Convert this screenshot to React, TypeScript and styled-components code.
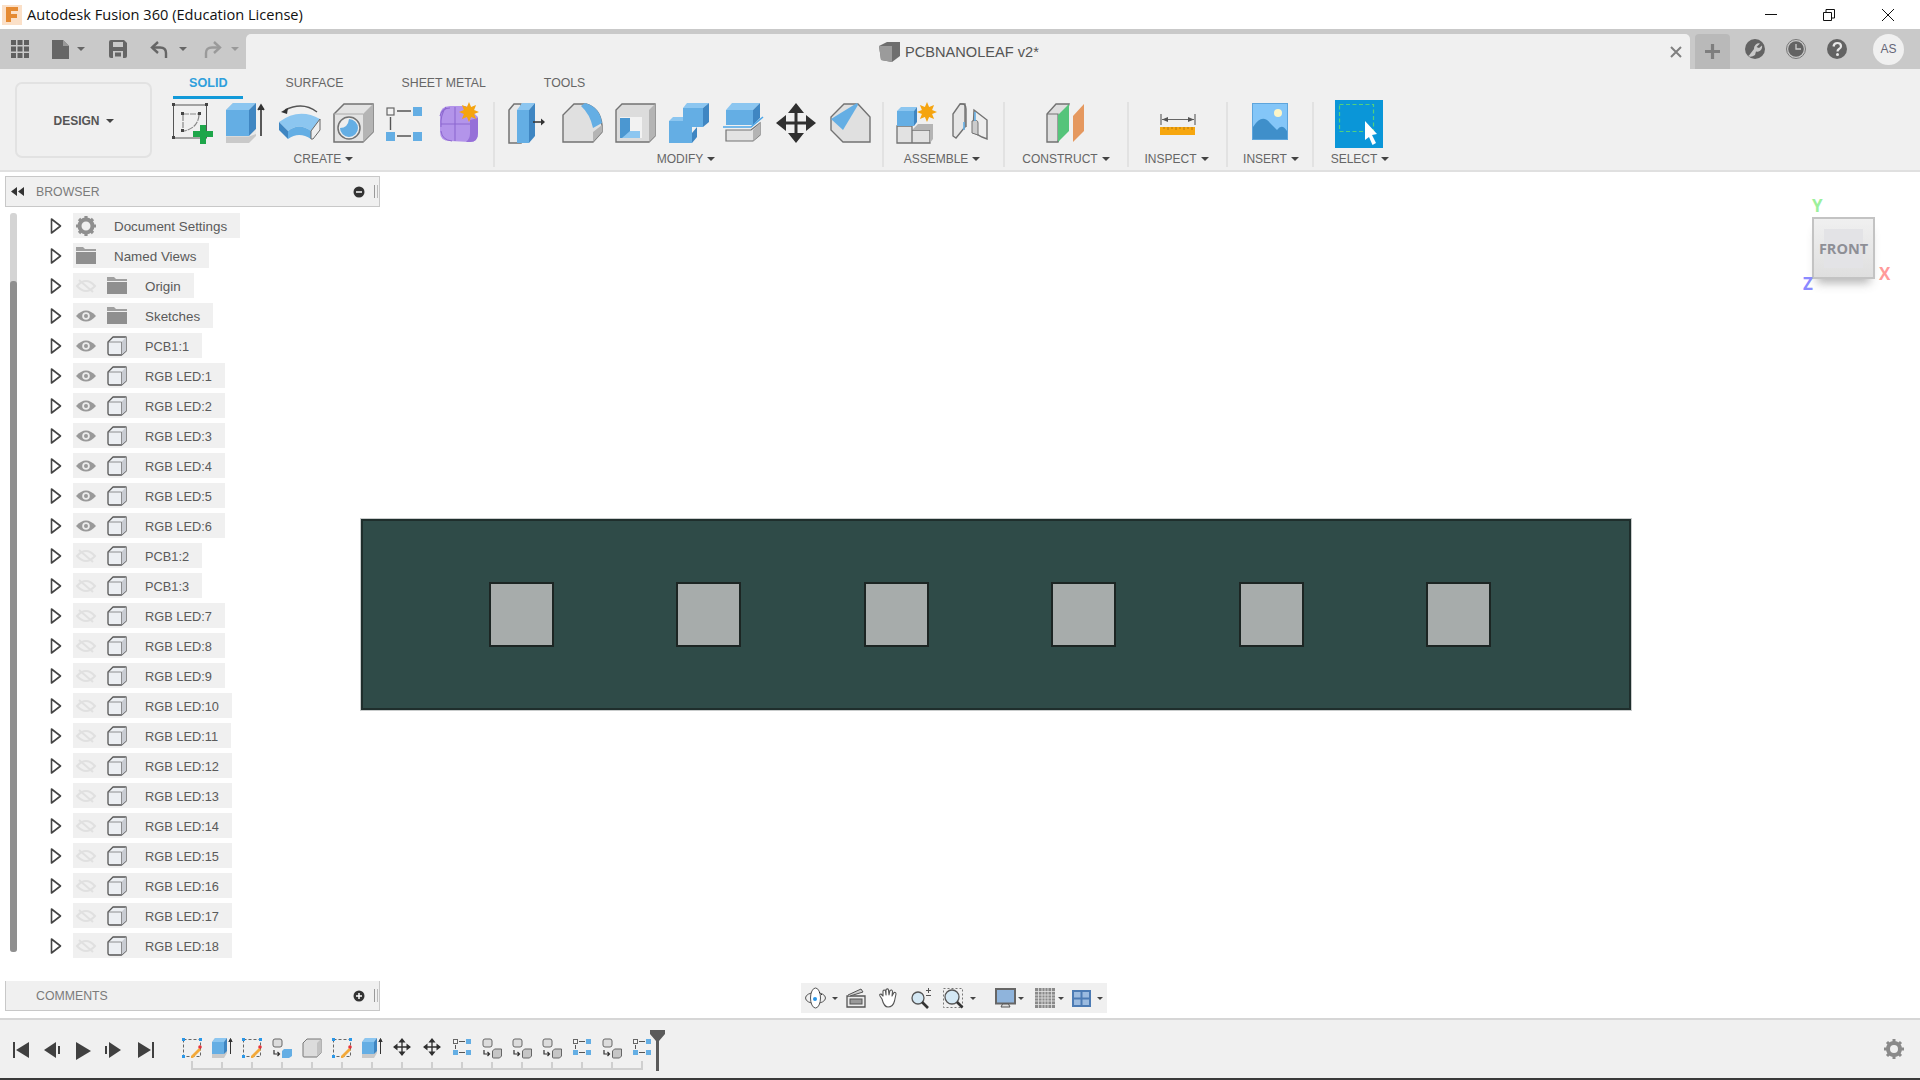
import React from "react";
import styled, { createGlobalStyle } from "styled-components";

const B = "#64aee4", BL = "#8cc6f0", BD = "#3f86c2", GD = "#b4b4b4", S = "#727272", DK = "#404040";

const Global = createGlobalStyle`
  html, body { margin: 0; padding: 0; width: 1920px; height: 1080px; overflow: hidden; background: #fff; }
  body { font-family: "Liberation Sans", Arial, sans-serif; }
`;

const Page = styled.div`
  width: 1920px; height: 1080px; display: flex; flex-direction: column; background: #fff; overflow: hidden;
`;

/* title bar */
const TitleBar = styled.header`
  height: 29px; flex: none; display: flex; align-items: center; padding-left: 2px; background: #fff;
`;
const TitleText = styled.span`
  margin-left: 5px; margin-top: -2px; font: 14.6px "Open Sans", sans-serif; color: #111; white-space: nowrap; flex: 1;
`;
const WinBtn = styled.div<{ $w: number }>`
  width: ${p => p.$w}px; display: flex; justify-content: flex-start; flex: none;
`;

/* tab bar */
const TabBar = styled.div`
  height: 40px; flex: none; background: #c9c9c9; display: flex; align-items: flex-end;
`;
const QuickBar = styled.div`
  width: 246px; height: 40px; flex: none; display: flex; align-items: center; padding-left: 11px; box-sizing: border-box;
`;
const Quick = styled.span<{ $ml?: number }>`
  margin-left: ${p => p.$ml ?? 0}px; display: flex; align-items: center;
`;
const DocTab = styled.div`
  width: 1444px; height: 35px; flex: none; background: #f0f0f0; border-radius: 5px 5px 0 0;
  display: flex; align-items: center; padding-left: 633px; padding-right: 8px; box-sizing: border-box;
`;
const DocTitle = styled.span`
  margin-left: 5px; flex: 1; font-size: 14.6px; color: #555; white-space: nowrap;
`;
const PlusTab = styled.div`
  margin-left: 5px; width: 35px; height: 35px; flex: none; background: #b9b9b9; border-radius: 4px 4px 0 0;
  display: flex; align-items: center; justify-content: center;
`;
const TopIcons = styled.div`
  display: flex; align-items: center; height: 40px; padding-left: 15px;
`;
const TopIcon = styled.span<{ $ml: number }>`
  margin-left: ${p => p.$ml}px; display: flex;
`;
const Avatar = styled.div`
  margin-left: 26px; width: 31px; height: 31px; border-radius: 50%; background: #f0f0f0; color: #667;
  display: flex; align-items: center; justify-content: center; font-size: 12px;
`;

/* ribbon */
const Ribbon = styled.div`
  height: 88px; flex: none; background: #f0f0f0; border-bottom: 2px solid #e0e0e0; display: flex;
  padding: 13px 0 0 15px;
`;
const DesignBtn = styled.button`
  width: 137px; height: 76px; flex: none; box-sizing: border-box; border: 2px solid #e2e2e2; border-radius: 7px; background: #f0f0f0;
  font: bold 12px "Liberation Sans", sans-serif; color: #555; display: flex; align-items: center; justify-content: center; gap: 6px; padding: 1px 0 0;
`;
const RibbonBody = styled.div`
  margin-left: 20px; margin-top: -7px; display: flex; flex-direction: column;
`;
const Tabs = styled.div`
  display: flex; gap: 26px; height: 24px; flex: none; margin-left: 1px;
`;
const Tab = styled.div<{ $on?: boolean }>`
  padding: 0 16px; height: 24px; box-sizing: border-box; line-height: 16px; font-size: ${p => (p.$on ? 12.6 : 12.3)}px;
  font-weight: ${p => (p.$on ? "bold" : "normal")}; color: ${p => (p.$on ? "#2f9fdc" : "#666")};
  border-bottom: 3px solid ${p => (p.$on ? "#129ad9" : "transparent")}; white-space: nowrap;
`;
const Groups = styled.div`
  display: flex; margin-top: 3px;
`;
const Group = styled.div<{ $w: number; $pad?: string; $sep?: boolean }>`
  width: ${p => p.$w}px; box-sizing: border-box; padding: ${p => p.$pad ?? "0"};
  border-right: ${p => (p.$sep === false ? "none" : "2px solid #e2e2e2")};
  display: flex; flex-direction: column; align-items: center; height: 65px;
`;
const IconRow = styled.div<{ $gap?: number; $center?: boolean }>`
  display: flex; flex: none; gap: ${p => p.$gap ?? 14}px; height: 46px; padding-top: 1px; align-items: flex-start; align-self: stretch;
  justify-content: ${p => (p.$center ? "center" : "flex-start")};
`;
const IconCell = styled.span<{ $w?: number; $dy?: number }>`
  display: flex; flex: none; width: ${p => p.$w ?? 40}px; margin-top: ${p => p.$dy ?? 0}px;
`;
const GroupLabel = styled.div<{ $dx?: number }>`
  margin-top: 2px; margin-left: ${p => p.$dx ?? 0}px; font-size: 12px; line-height: 16px; color: #666; display: flex; align-items: center; gap: 4px; white-space: nowrap;
`;
const Caret = styled.i<{ $c?: string; $s?: number }>`
  display: inline-block; width: 0; height: 0; flex: none;
  border-left: ${p => p.$s ?? 4}px solid transparent; border-right: ${p => p.$s ?? 4}px solid transparent;
  border-top: ${p => (p.$s ?? 4) + 0.5}px solid ${p => p.$c ?? "#444"};
`;

/* stage */
const Stage = styled.main`
  flex: 1; position: relative; display: flex; min-height: 0;
`;
const Sidebar = styled.aside`
  width: 380px; margin-right: -19px; flex: none; display: flex; flex-direction: column; padding: 4px 0 7px 5px; box-sizing: border-box; position: relative; z-index: 1;
`;
const PanelHead = styled.div<{ $open?: boolean }>`
  height: ${p => (p.$open ? 31 : 30)}px; flex: none; box-sizing: border-box; background: #f0f0f0;
  border: 1px solid #c8c8c8; border-top-width: ${p => (p.$open ? 1 : 0)}px; display: flex; align-items: center; padding: 0 1px 0 ${p => (p.$open ? 5 : 30)}px;
  margin-top: ${p => (p.$open ? 0 : "auto")};
`;
const PanelTitle = styled.span<{ $open?: boolean }>`
  margin-left: ${p => (p.$open ? 12 : 0)}px; flex: 1; font-size: 12.3px; color: #7b7b7b;
`;
const Grip = styled.span`
  margin-left: 9px; width: 2px; height: 13px; box-sizing: content-box; border-left: 1px solid #999; border-right: 1px solid #bbb;
`;
const Tree = styled.div`
  display: flex; margin-top: 6px;
`;
const ScrollTrack = styled.div`
  margin-left: 5px; width: 7px; height: 739px; flex: none; background: #d4d4d4; border-radius: 3px; display: flex; flex-direction: column; justify-content: flex-end;
`;
const ScrollThumb = styled.div`
  height: 671px; background: #8f8f8f; border-radius: 3px;
`;
const Rows = styled.ul`
  list-style: none; margin: 0; padding: 0 0 0 33px; display: flex; flex-direction: column; gap: 5px;
`;
const Row = styled.li`
  height: 25px; display: flex; align-items: center; gap: 11px;
`;
const Pill = styled.div`
  height: 25px; background: #f0f0f0; display: flex; align-items: center; padding: 0 13px 0 3px;
`;
const Slot = styled.span<{ $mr: number }>`
  width: 20px; margin-right: ${p => p.$mr}px; display: flex; justify-content: center; flex: none;
`;
const RowLabel = styled.span<{ $body?: boolean }>`
  font-size: ${p => (p.$body ? 12.8 : 13.4)}px; color: #5a5a5a; white-space: nowrap; padding-top: 1px;
`;

/* canvas */
const Canvas = styled.section`
  flex: 1; padding-top: 347px; min-width: 0;
`;
const Board = styled.div`
  width: 1270px; height: 191px; box-sizing: border-box; background: #2f4b48; border: 2px solid #1f2e2c; outline: 1px solid #c9cccc;
  display: flex; align-items: center; padding-left: 125.5px; gap: 122.5px;
`;
const Led = styled.div`
  width: 65px; height: 65px; flex: none; box-sizing: border-box; background: #a7acab; border: 2px solid #1c2523;
`;
const ViewCube = styled.div`
  position: absolute; left: 1812px; top: 45px; width: 63px; height: 62px; box-sizing: border-box; border: 2px solid #c3c3c3;
  background: linear-gradient(#f0f0f0, #dfdfdf); display: flex; align-items: center; justify-content: center;
  box-shadow: 0 9px 9px -5px rgba(90, 90, 90, .45);
`;
const CubeFace = styled.div`
  width: 39px; height: 39px; background: #e3e3e6; display: flex; align-items: center; justify-content: center;
  font: bold 14.5px "Open Sans", sans-serif; color: #8e8f96; white-space: nowrap;
`;
const Axis = styled.span<{ $c: string; $x: number; $y: number }>`
  position: absolute; left: ${p => p.$x}px; top: ${p => p.$y}px; color: ${p => p.$c}; font: bold 17px "Open Sans", sans-serif; line-height: 16px;
`;
const NavBar = styled.div`
  position: absolute; left: 801px; top: 811px; width: 306px; height: 30px; background: #f0f0f0; display: flex; align-items: center;
`;
const NavItem = styled.span<{ $x: number }>`
  margin-left: ${p => p.$x}px; display: flex; align-items: center;
`;

/* timeline */
const Timeline = styled.footer`
  height: 62px; flex: none; box-sizing: border-box; background: #f0f0f0; border-top: 2px solid #d6d6d6; border-bottom: 2px solid #3a3a3a;
  display: flex; padding-left: 13px; position: relative;
`;
const Transport = styled.span<{ $ml: number }>`
  margin-left: ${p => p.$ml}px; margin-top: 22px; display: flex; height: 16px;
`;
const Track = styled.div`
  margin-left: 23px; margin-top: 18px; display: flex; flex-direction: column;
`;
const TrackIcons = styled.div`
  display: flex; height: 22px;
`;
const TrackItem = styled.span`
  width: 30px; flex: none; display: flex; justify-content: center;
`;
const Marker = styled.div`
  margin-left: -7px; margin-top: 10px; display: flex;
`;
const Cog = styled.span`
  margin-left: auto; margin-right: 16px; margin-top: 19px; display: flex; height: 20px;
`;

const Glyph = styled.svg`
  display: block; flex: none; overflow: visible;
`;
const I: React.FC<{ w?: number; h?: number; vw?: number; vh?: number; children: React.ReactNode }> = ({ w = 40, h = 40, vw, vh, children }) => (
  <Glyph width={w} height={h} viewBox={`0 0 ${vw ?? w} ${vh ?? h}`}>{children}</Glyph>
);

/* ribbon icons */
const Sq = ({ x, y, s = 3, c = "#444" }: { x: number; y: number; s?: number; c?: string }) => <rect x={x} y={y} width={s} height={s} fill={c} />;
const SketchI = () => (
  <I>
    <rect x="1.5" y="2" width="33" height="33" fill="none" stroke="#555" strokeWidth="1" />
    <Sq x={0} y={0} /><Sq x={33} y={0} /><Sq x={0} y={33} />
    <path d="M11 11H27M11 12V28M27 12Q26 25 12 28" fill="none" stroke="#888" strokeWidth="1.2" strokeDasharray="6 1" />
    <Sq x={9} y={9} /><Sq x={26} y={9} /><Sq x={9} y={26} />
    <path d="M28 22h6v6h7v6h-7v7h-6v-7h-7v-6h7z" fill="#1ea64a" />
  </I>
);
const ExtrudeI = () => (
  <I>
    <path d="M0 7L7 0H30V33L23 40H0Z" fill="#c9c9c9" />
    <path d="M0 7H23V33H0Z" fill={B} /><path d="M0 7L7 0H30L23 7Z" fill={BL} /><path d="M23 7L30 0V26L23 33Z" fill={BD} />
    <path d="M0 33H23L30 26V31L23 33.5H0Z" fill="#fff" opacity=".6" />
    <path d="M35 33V3M32 7L35 2L38 7" stroke="#333" strokeWidth="1.6" fill="#333" />
  </I>
);
const RevolveI = () => (
  <I w={42}>
    <path d="M6 7Q24 -2 38 9" fill="none" stroke="#555" strokeWidth="1.4" />
    <path d="M2 9L9 5L8 11Z" fill="#333" />
    <path d="M0 19Q20 4 41 16L32 28Q20 19 9 28Z" fill={BL} />
    <path d="M0 19L9 28V36L0 27Z" fill={BD} />
    <path d="M9 28Q20 19 32 28V36Q20 28 9 36Z" fill={B} />
    <path d="M32 28L41 16V27L34 36L32 36Z" fill="#eee" stroke="#666" strokeWidth="1" />
  </I>
);
const HoleI = () => (
  <I w={41}>
    <path d="M1 39V11L11 1H40V29L30 39Z" fill="#e3e3e3" stroke={S} strokeWidth="1.5" />
    <path d="M30 39V11L40 1V29Z" fill={GD} /><path d="M1 11H30" stroke="#aaa" />
    <circle cx="16" cy="25" r="11" fill="#eee" stroke={S} strokeWidth="1.5" />
    <path d="M16 16a9 9 0 1 1 -9 9q8 0 9 -9z" fill={B} />
  </I>
);
const PatternI = () => (
  <I w={37} h={38}>
    <rect x="1" y="5" width="7" height="7" fill="#f3f3f3" stroke="#666" strokeWidth="1.2" />
    <rect x="27" y="4" width="9" height="9" fill={B} /><rect x="0" y="29" width="9" height="9" fill={B} /><rect x="27" y="29" width="9" height="9" fill={B} />
    <path d="M11 8H25M11 33H25M4.5 14V27" stroke="#555" strokeWidth="1.4" />
  </I>
);
const StarOrange = ({ x, y, r }: { x: number; y: number; r: number }) => {
  const pts = Array.from({ length: 16 }, (_, i) => {
    const a = (i * Math.PI) / 8, q = i % 2 ? r * 0.55 : r;
    return `${(x + q * Math.sin(a)).toFixed(1)},${(y - q * Math.cos(a)).toFixed(1)}`;
  }).join(" ");
  return <polygon points={pts} fill="#f5a40f" />;
};
const FormI = () => (
  <I w={38} h={40}>
    <path d="M10 3H26L38 14V30Q38 39 30 39L10 38Q0 38 0 29V13Q0 3 10 3Z" fill="#b394ea" />
    <path d="M30 39Q38 39 38 30V15L30 17V30Q30 36 26 39Z" fill="#9670d8" />
    <path d="M0 13Q2 5 10 5M1 21H30M15 4V38M6 4Q0 12 1 24" stroke="#8d68d0" strokeWidth="1.1" fill="none" />
    <path d="M1 28Q2 37 12 38" stroke="#8d68d0" strokeWidth="1" fill="none" />
    <StarOrange x={29} y={9} r={10} />
  </I>
);
const PressI = () => (
  <I w={38}>
    <path d="M1 40V7L6 1H13V40Z" fill="#e8e8e8" stroke={S} strokeWidth="1.5" />
    <path d="M9 7H21V40H9Z" fill={B} /><path d="M9 7L14 0H27L21 7Z" fill={BL} /><path d="M21 7L27 0V33L21 40Z" fill={BD} />
    <path d="M25 19H34" stroke="#333" strokeWidth="1.5" /><path d="M33 15.5L37 19L33 22.5Z" fill="#333" />
  </I>
);
const FilletI = () => (
  <I>
    <path d="M1 39V12L12 1H24Q38 5 40 22V29L31 39Z" fill="#e0e0e0" stroke={S} strokeWidth="1.4" />
    <path d="M31 39V29L40 22V29Z" fill={GD} />
    <path d="M19 3L23 0Q38 4 40 20L31 25Q28 11 19 3Z" fill={B} />
  </I>
);
const ShellI = () => (
  <I>
    <path d="M1 39V7L7 1H40V33L34 39Z" fill="#dcdcdc" stroke={S} strokeWidth="1.4" />
    <path d="M34 39V7L40 1V33Z" fill={GD} />
    <rect x="5" y="14" width="22" height="21" fill="#f2f2f2" />
    <path d="M5 15H15V28H25V35H5Z" fill="#4b97d1" /><path d="M15 28L25 28V35H7Z" fill={BL} />
  </I>
);
const CombineI = () => (
  <I w={41}>
    <path d="M14 5H34V24H14Z" fill={B} /><path d="M14 5L18 0H40L34 5Z" fill={BL} /><path d="M34 5L40 0V19L34 24Z" fill={BD} />
    <path d="M0 18H23V40H0Z" fill={B} /><path d="M0 18L4 14H14V18Z" fill={BL} /><path d="M23 24H28L23 30V40L28 34V24Z" fill={BD} />
  </I>
);
const OffsetI = () => (
  <I w={41}>
    <path d="M3 7H30V22H3Z" fill={B} /><path d="M3 7L9 0H37L30 7Z" fill={BL} /><path d="M30 7L37 0V15L30 22Z" fill={BD} />
    <path d="M0 24H28L40 14" fill="none" stroke="#4da7e8" strokeWidth="1.6" />
    <path d="M3 27H28L37 20V32L30 38H3Z" fill="#e3e3e3" stroke={S} strokeWidth="1.2" />
    <path d="M30 27L37 20V32L30 38Z" fill={GD} />
  </I>
);
const MoveI = ({ s = 40, c = "#303030" }: { s?: number; c?: string }) => (
  <I w={s} h={s} vw={40} vh={40}>
    <path d="M20 3V37M3 20H37" stroke={c} strokeWidth="3" />
    <path d="M20 0L28 10H12ZM20 40L12 30H28ZM0 20L10 12V28ZM40 20L30 28V12Z" fill={c} />
  </I>
);
const ChamferI = () => (
  <I>
    <path d="M1 27V14L14 1H28L40 14V39H13Z" fill="#e0e0e0" stroke={S} strokeWidth="1.4" />
    <path d="M1 16L27 0L28 2L13 27Z" fill={B} />
  </I>
);
const NewCompI = () => (
  <I w={41} h={40}>
    <path d="M0 23H15V40H0ZM15 27H33V40H15Z" fill="#e2e2e2" stroke={S} strokeWidth="1.3" />
    <path d="M15 27L21 21H36L33 27ZM33 27L36 21V36L33 40Z" fill={GD} />
    <path d="M0 8H17V23H0Z" fill={B} /><path d="M0 8L4 4H20L17 8Z" fill={BL} /><path d="M17 8L20 4V19L17 23Z" fill={BD} />
    <StarOrange x={30} y={9} r={10} />
  </I>
);
const JointI = () => (
  <I w={36}>
    <path d="M1 33V11L8 1H13V24L4 35Z" fill="#e6e6e6" stroke={S} strokeWidth="1.4" />
    <path d="M8 1Q14 0 14 6V24" fill="none" stroke={S} strokeWidth="1.4" />
    <path d="M22 7L35 17V36L30 34L21 29Z" fill="#eee" stroke={S} strokeWidth="1.4" />
    <path d="M20 18Q26 16 26 20V32L20 30Z" fill="#ccc" stroke={S} strokeWidth="1" />
    <path d="M12 19V27M23 9V18" stroke={B} strokeWidth="1.6" />
  </I>
);
const ConstructI = () => (
  <I>
    <path d="M1 39V11L10 1H23L12 39Z" fill="#dedede" stroke={S} strokeWidth="1.4" />
    <path d="M1 11H12V39" fill="none" stroke={S} strokeWidth="1.2" />
    <path d="M12 12L23 1V28L12 39Z" fill="#55c47a" />
    <path d="M27 13L38 1V28L27 39Z" fill="#e5985f" />
  </I>
);
const InspectI = () => (
  <I w={36} h={22}>
    <path d="M1 0V11M35 0V11M2 5.500H34" stroke="#666" strokeWidth="1.2" fill="none" />
    <path d="M2 5.5L8 3V8ZM34 5.500L28 3V8Z" fill="#555" />
    <rect x="0" y="13" width="35" height="8" fill="#f7a70f" />
    <path d="M4 13v2M8 13v3M12 13v2M16 13v3M20 13v2M24 13v3M28 13v2M32 13v3" stroke="#a8700a" strokeWidth=".8" />
  </I>
);
const InsertI = () => (
  <I w={36} h={37}>
    <rect x=".5" y=".5" width="35" height="36" fill="#84c6f8" stroke="#5ea5dc" />
    <circle cx="26" cy="10" r="4" fill="#fdf6c8" />
    <path d="M1 24Q10 10 18 20Q22 24 25 27Q30 20 35 28V36H1Z" fill="#3f8fca" />
  </I>
);
const SelectI = () => (
  <I w={48} h={48}>
    <rect width="48" height="48" fill="#0a96d8" />
    <rect x="4.500" y="4.500" width="34" height="27" fill="none" stroke="#52d07e" strokeWidth="1.2" strokeDasharray="4 2.500" />
    <path d="M30 21L42 34L37 35L41 43L37.500 45L34 37L30 40Z" fill="#fff" />
  </I>
);

/* tree icons */
const Chevron = () => (
  <I w={12} h={16}>
    <path d="M1.500 1L10.500 8L1.500 15Z" fill="#fff" stroke="#444" strokeWidth="1.600" strokeLinejoin="round" />
  </I>
);
const Gear = () => (
  <I w={20} h={20}>
    <circle cx="10" cy="10" r="6.500" fill="none" stroke="#8f8f8f" strokeWidth="4" />
    <path d="M10 0V20M0 10H20M3 3L17 17M17 3L3 17" stroke="#8f8f8f" strokeWidth="3.200" strokeDasharray="3.500 13 3.500 0" />
  </I>
);
const Folder = () => (
  <I w={20} h={17}>
    <path d="M0 0H7L9 2H20V4H0Z" fill="#a0a0a0" /><rect y="5" width="20" height="12" fill="#8f8f8f" />
  </I>
);
const EyeOn = () => (
  <I w={20} h={12}>
    <path d="M0 6Q10 -5 20 6Q10 17 0 6Z" fill="#999" />
    <circle cx="10" cy="6" r="3.800" fill="#ececec" /><circle cx="10" cy="6" r="2" fill="#999" />
  </I>
);
const EyeOff = () => (
  <I w={20} h={14}>
    <path d="M1 7Q10 -3 19 7Q10 17 1 7Z" fill="none" stroke="#e0e0e0" strokeWidth="2" />
    <path d="M3 1L17 13" stroke="#e0e0e0" strokeWidth="2" />
  </I>
);
const Body = () => (
  <I w={20} h={20}>
    <path d="M1 6L6 1H19V15L14.500 19H3Q1 19 1 17Z" fill="#eceff3" stroke="#555" strokeWidth="1.300" strokeLinejoin="round" />
    <path d="M14.500 19V6L19 1V15Z" fill="#c9ccd2" /><path d="M1 6H14.500V19" fill="none" stroke="#777" strokeWidth=".8" />
  </I>
);
const CircleBtn = ({ plus }: { plus?: boolean }) => (
  <I w={12} h={12}>
    <circle cx="6" cy="6" r="5.500" fill="#333" />
    <path d={plus ? "M3 6H9M6 3V9" : "M3 6H9"} stroke="#fff" strokeWidth="1.500" />
  </I>
);

/* timeline icons */
const TLSketch = () => (
  <I w={20} h={20}>
    <rect x="1.500" y="1.500" width="17" height="17" fill="none" stroke="#666" strokeDasharray="3 2" />
    <Sq x={0} y={0} c="#2a97e8" /><Sq x={17} y={0} c="#2a97e8" /><Sq x={0} y={17} c="#2a97e8" />
    <path d="M9 18L17 10L19 12L11 20H9Z" fill="#f3a93a" /><circle cx="18" cy="9" r="1.800" fill="#e8333a" />
  </I>
);
const TLExtrude = () => (
  <I w={20} h={20}>
    <path d="M0 4L3 0H15V15L12 20H0Z" fill="#c9c9c9" />
    <path d="M0 4H12V16H0Z" fill={B} /><path d="M0 4L3 0H15L12 4Z" fill={BL} /><path d="M12 4L15 0V13L12 16Z" fill={BD} />
    <path d="M18.500 16V2M16.800 4L18.500 .500L20.200 4" stroke="#333" fill="#333" />
  </I>
);
const TLConvert = ({ blue }: { blue?: boolean }) => (
  <I w={20} h={20}>
    <rect x="1" y="1" width="9" height="8" rx="2" fill="#dcdcdc" stroke="#666" />
    <path d="M2 12V16H7M5.500 14L7.500 16L5.500 18" fill="none" stroke="#333" strokeWidth="1.200" />
    {blue
      ? <path d="M10 13H17V20H10ZM10 13L12 11H20L17 13ZM17 13L20 11V18L17 20Z" fill={B} />
      : <path d="M10.500 13L12.500 11H19.500V18L17.500 20H11.500Q10.500 20 10.500 19Z" fill="#c6c6c6" stroke="#666" />}
  </I>
);
const TLBox = () => (
  <I w={20} h={20}>
    <path d="M1 5L5 1H19V15L15 19H2Q1 19 1 18Z" fill="#dcdcdc" stroke="#777" />
    <path d="M15 19V5L19 1V15Z" fill="#c2c2c2" />
  </I>
);
const TLPattern = () => (
  <I w={18} h={18}>
    <rect x=".5" y="1.500" width="4" height="4" fill="#f5f5f5" stroke="#666" />
    <rect x="13" y="1" width="5" height="5" fill={B} /><rect y="12" width="5" height="5" fill={B} /><rect x="13" y="12" width="5" height="5" fill={B} />
    <path d="M6 3.500H12M6 14.500H12M2.500 7V11" stroke="#555" />
  </I>
);

const treeRows: { label: string; vis?: "on" | "off"; kind: "gear" | "folder" | "body" }[] = [
  { label: "Document Settings", kind: "gear" },
  { label: "Named Views", kind: "folder" },
  { label: "Origin", vis: "off", kind: "folder" },
  { label: "Sketches", vis: "on", kind: "folder" },
  { label: "PCB1:1", vis: "on", kind: "body" },
  ...[1, 2, 3, 4, 5, 6].map(n => ({ label: `RGB LED:${n}`, vis: "on" as const, kind: "body" as const })),
  { label: "PCB1:2", vis: "off", kind: "body" },
  { label: "PCB1:3", vis: "off", kind: "body" },
  ...[7, 8, 9, 10, 11, 12, 13, 14, 15, 16, 17, 18].map(n => ({ label: `RGB LED:${n}`, vis: "off" as const, kind: "body" as const })),
];

const TimelineIcons = [
  <TLSketch />, <TLExtrude />, <TLSketch />, <TLConvert blue />, <TLBox />, <TLSketch />, <TLExtrude />,
  <MoveI s={18} />, <MoveI s={18} />, <TLPattern />, <TLConvert />, <TLConvert />, <TLConvert />, <TLPattern />, <TLConvert />, <TLPattern />,
];

export default function App() {
  return (
    <Page>
      <Global />
      <TitleBar>
        <I w={20} h={20}>
          <rect width="20" height="20" fill="#fbe0c8" />
          <path d="M4 2H16V6H9V9H15V13H9V17H4Z" fill="#e58a32" />
        </I>
        <TitleText>Autodesk Fusion 360 (Education License)</TitleText>
        <WinBtn $w={58}><I w={12} h={12}><path d="M0 5.500H12" stroke="#111" /></I></WinBtn>
        <WinBtn $w={59}><I w={12} h={12}><path d="M.5 3.500H8.500V11.500H.5ZM3 3V.5H11.500V9H9" fill="none" stroke="#111" /></I></WinBtn>
        <WinBtn $w={38}><I w={12} h={12}><path d="M0 0L12 12M12 0L0 12" stroke="#111" /></I></WinBtn>
      </TitleBar>

      <TabBar>
        <QuickBar>
          <I w={18} h={18}><path d="M0 0h5v5H0zM6.500 0h5v5h-5zM13 0h5v5h-5zM0 6.500h5v5H0zM6.500 6.500h5v5h-5zM13 6.500h5v5h-5zM0 13h5v5H0zM6.500 13h5v5h-5zM13 13h5v5h-5z" fill="#606060" /></I>
          <Quick $ml={23}><I w={17} h={19}><path d="M0 0H11L17 6V19H0Z" fill="#666" /><path d="M11 0V6H17" fill="#999" /></I></Quick>
          <Quick $ml={8}><Caret $c="#666" $s={4} /></Quick>
          <Quick $ml={24}><I w={18} h={18}><path d="M0 2Q0 0 2 0H15L18 3V16Q18 18 16 18H2Q0 18 0 16Z" fill="#666" /><rect x="4" y="2" width="10" height="5" fill="#c9c9c9" /><rect x="4" y="11" width="10" height="7" fill="#c9c9c9" /><rect x="6" y="12.500" width="6" height="4" fill="#666" /></I></Quick>
          <Quick $ml={24}><I w={17} h={18}><path d="M7 2L1 7.500L7 13" fill="none" stroke="#666" strokeWidth="2.400" /><path d="M2 7.500H9Q15 7.500 15 13V18" fill="none" stroke="#666" strokeWidth="2.400" /></I></Quick>
          <Quick $ml={11}><Caret $c="#666" $s={4} /></Quick>
          <Quick $ml={17}><I w={17} h={18}><path d="M10 2L16 7.500L10 13" fill="none" stroke="#9a9a9a" strokeWidth="2.400" /><path d="M15 7.500H8Q2 7.500 2 13V18" fill="none" stroke="#9a9a9a" strokeWidth="2.400" /></I></Quick>
          <Quick $ml={10}><Caret $c="#999" $s={4} /></Quick>
        </QuickBar>
        <DocTab>
          <I w={21} h={20}><path d="M0 4L8 0H21V14L13 20L2 18Z" fill="#6e6e6e" /><path d="M0 4H13V20L2 18Z" fill="#9b9b9b" /></I>
          <DocTitle>PCBNANOLEAF v2*</DocTitle>
          <I w={12} h={12}><path d="M1 1L11 11M11 1L1 11" stroke="#808080" strokeWidth="2" /></I>
        </DocTab>
        <PlusTab><I w={17} h={17}><path d="M8.500 1V16M1 8.500H16" stroke="#7e7e7e" strokeWidth="3.200" /></I></PlusTab>
        <TopIcons>
          <TopIcon $ml={0}>
            <I w={20} h={20}><circle cx="10" cy="10" r="10" fill="#636363" /><path d="M15 4.500A5 5 0 0 0 9 10L4 16.500L3 17Q6 19 10 16L11 12.500A5 5 0 0 0 17 6.500L14 9L11.500 8Z" fill="#c9c9c9" /></I>
          </TopIcon>
          <TopIcon $ml={21}>
            <I w={20} h={20}><circle cx="10" cy="10" r="9.500" fill="none" stroke="#777" /><circle cx="10" cy="10" r="7.800" fill="#636363" /><path d="M10 5V10H15" fill="none" stroke="#ccc" strokeWidth="1.300" /></I>
          </TopIcon>
          <TopIcon $ml={21}>
            <I w={20} h={20}><circle cx="10" cy="10" r="10" fill="#636363" /><path d="M6.500 7.500Q7 4 10.300 4Q14 4 14 7.200Q14 9 12 10Q10.500 11 10.500 12.500" fill="none" stroke="#e8e8e8" strokeWidth="2.200" /><circle cx="10.500" cy="15.500" r="1.500" fill="#e8e8e8" /></I>
          </TopIcon>
          <Avatar>AS</Avatar>
        </TopIcons>
      </TabBar>

      <Ribbon>
        <DesignBtn>DESIGN <Caret /></DesignBtn>
        <RibbonBody>
          <Tabs>
            <Tab $on>SOLID</Tab>
            <Tab>SURFACE</Tab>
            <Tab>SHEET METAL</Tab>
            <Tab>TOOLS</Tab>
          </Tabs>
          <Groups>
            <Group $w={323} $pad="0 18px 0 0">
              <IconRow $gap={13.6}>
                <IconCell><SketchI /></IconCell><IconCell><ExtrudeI /></IconCell><IconCell><RevolveI /></IconCell>
                <IconCell><HoleI /></IconCell><IconCell><PatternI /></IconCell><IconCell><FormI /></IconCell>
              </IconRow>
              <GroupLabel>CREATE <Caret /></GroupLabel>
            </Group>
            <Group $w={389} $pad="0 18px 0 13px">
              <IconRow $gap={13.67}>
                <IconCell><PressI /></IconCell><IconCell><FilletI /></IconCell><IconCell><ShellI /></IconCell>
                <IconCell><CombineI /></IconCell><IconCell><OffsetI /></IconCell><IconCell><MoveI /></IconCell><IconCell><ChamferI /></IconCell>
              </IconRow>
              <GroupLabel>MODIFY <Caret /></GroupLabel>
            </Group>
            <Group $w={121} $pad="0 16px 0 13px">
              <IconRow $gap={15}><IconCell><NewCompI /></IconCell><IconCell><JointI /></IconCell></IconRow>
              <GroupLabel>ASSEMBLE <Caret /></GroupLabel>
            </Group>
            <Group $w={124}>
              <IconRow $center><IconCell><ConstructI /></IconCell></IconRow>
              <GroupLabel>CONSTRUCT <Caret /></GroupLabel>
            </Group>
            <Group $w={99}>
              <IconRow $center><IconCell $w={36} $dy={11}><InspectI /></IconCell></IconRow>
              <GroupLabel $dx={-2}>INSPECT <Caret /></GroupLabel>
            </Group>
            <Group $w={86}>
              <IconRow $center><IconCell $w={36}><InsertI /></IconCell></IconRow>
              <GroupLabel $dx={2}>INSERT <Caret /></GroupLabel>
            </Group>
            <Group $w={90} $sep={false}>
              <IconRow $center><IconCell $w={48} $dy={-3}><SelectI /></IconCell></IconRow>
              <GroupLabel $dx={2}>SELECT <Caret /></GroupLabel>
            </Group>
          </Groups>
        </RibbonBody>
      </Ribbon>

      <Stage>
        <Sidebar>
          <PanelHead $open>
            <I w={13} h={9}><path d="M6 0V9L0 4.500ZM13 0V9L7 4.500Z" fill="#333" /></I>
            <PanelTitle $open>BROWSER</PanelTitle>
            <CircleBtn />
            <Grip />
          </PanelHead>
          <Tree>
            <ScrollTrack><ScrollThumb /></ScrollTrack>
            <Rows>
              {treeRows.map(r => (
                <Row key={r.label}>
                  <Chevron />
                  <Pill>
                    {r.vis && <Slot $mr={11}>{r.vis === "on" ? <EyeOn /> : <EyeOff />}</Slot>}
                    <Slot $mr={18}>{r.kind === "gear" ? <Gear /> : r.kind === "folder" ? <Folder /> : <Body />}</Slot>
                    <RowLabel $body={r.kind === "body"}>{r.label}</RowLabel>
                  </Pill>
                </Row>
              ))}
            </Rows>
          </Tree>
          <PanelHead>
            <PanelTitle>COMMENTS</PanelTitle>
            <CircleBtn plus />
            <Grip />
          </PanelHead>
        </Sidebar>
        <Canvas>
          <Board>{[0, 1, 2, 3, 4, 5].map(i => <Led key={i} />)}</Board>
        </Canvas>
        <Axis $c="#9cf09c" $x={1812} $y={26}>Y</Axis>
        <ViewCube><CubeFace>FRONT</CubeFace></ViewCube>
        <Axis $c="#ff9a9a" $x={1879} $y={94}>X</Axis>
        <Axis $c="#8a8aff" $x={1803} $y={104}>Z</Axis>
        <NavBar>
          <NavItem $x={4}>
            <I w={21} h={22}><ellipse cx="10.500" cy="11" rx="10" ry="5.500" fill="none" stroke="#555" /><ellipse cx="10.500" cy="11" rx="5" ry="10" fill="#fff" stroke="#555" /><circle cx="10" cy="12" r="2" fill="#2a97e8" /><path d="M14 5l1 1M16 7l1 1" stroke="#333" /></I>
          </NavItem>
          <NavItem $x={6}><Caret $s={3} /></NavItem>
          <NavItem $x={8}>
            <I w={20} h={20}><path d="M1 8H19V19H1Z" fill="#ececec" stroke="#555" strokeWidth="1.300" /><rect x="4" y="11" width="12" height="5" fill="#9a9a9a" stroke="#555" /><path d="M2 7L15 1L17 4L4 8" fill="#cfcfcf" stroke="#555" /></I>
          </NavItem>
          <NavItem $x={12}>
            <I w={20} h={20}><path d="M4 11L2 8Q1 6 3 6L5 8V3Q6 1 7.500 3L8 7V1.500Q10 0 10.500 2L11 7L12 2.500Q14 1 14.500 3.500L14 8L16 4.500Q18 4 18 6L16.500 13Q15 19 10 19Q6 19 4 11Z" fill="#fff" stroke="#555" strokeWidth="1.100" strokeLinejoin="round" /></I>
          </NavItem>
          <NavItem $x={13}>
            <I w={20} h={20}><circle cx="7" cy="10" r="6" fill="#d4e8f4" stroke="#555" strokeWidth="1.300" /><path d="M11 14L17 20" stroke="#333" strokeWidth="2.600" /><path d="M15 2.500H20M17.500 0V5M15 7.500H20" stroke="#555" /></I>
          </NavItem>
          <NavItem $x={12}>
            <I w={20} h={20}><rect x=".5" y=".5" width="19" height="19" fill="none" stroke="#777" strokeDasharray="2 2" /><circle cx="9" cy="9" r="7" fill="#d4e8f4" stroke="#555" strokeWidth="1.300" /><path d="M14 14L19.500 19.500" stroke="#333" strokeWidth="2.600" /></I>
          </NavItem>
          <NavItem $x={7}><Caret $s={3} /></NavItem>
          <NavItem $x={19}>
            <I w={21} h={20}><rect x="1" y="1" width="19" height="14.500" fill="#8fb4dc" stroke="#666" strokeWidth="2" /><path d="M6 19H15L13.500 16H7.500Z" fill="#e0e0e0" stroke="#555" /></I>
          </NavItem>
          <NavItem $x={2}><Caret $s={3} /></NavItem>
          <NavItem $x={11}>
            <I w={20} h={20}><rect width="20" height="20" fill="#8a8a8a" /><path d="M3.500 0V20M7 0V20M10 0V20M13 0V20M16.500 0V20M0 3.500H20M0 7H20M0 10H20M0 13H20M0 16.500H20" stroke="#e4e4e4" strokeWidth=".8" /></I>
          </NavItem>
          <NavItem $x={3}><Caret $s={3} /></NavItem>
          <NavItem $x={8}>
            <I w={19} h={17}><rect width="19" height="17" fill="#4c7bb4" /><rect x="2" y="2" width="6.500" height="5.500" fill="#9bbbe0" /><rect x="10.500" y="2" width="6.500" height="5.500" fill="#9bbbe0" /><rect x="2" y="9.500" width="6.500" height="5.500" fill="#9bbbe0" /><rect x="10.500" y="9.500" width="6.500" height="5.500" fill="#9bbbe0" /></I>
          </NavItem>
          <NavItem $x={6}><Caret $s={3} /></NavItem>
        </NavBar>
      </Stage>

      <Timeline>
        <Transport $ml={0}><I w={16} h={16}><path d="M1 0V16" stroke="#404040" strokeWidth="2" /><path d="M16 0V16L3 8Z" fill={DK} /></I></Transport>
        <Transport $ml={15}><I w={16} h={16}><path d="M12 0V16L0 8Z" fill={DK} /><rect x="14" y="4" width="2" height="8" fill={DK} /></I></Transport>
        <Transport $ml={15}><I w={16} h={18}><path d="M1 0V18L16 9Z" fill={DK} /></I></Transport>
        <Transport $ml={14}><I w={16} h={16}><path d="M4 0V16L16 8Z" fill={DK} /><rect y="4" width="2" height="8" fill={DK} /></I></Transport>
        <Transport $ml={17}><I w={16} h={16}><path d="M0 0V16L13 8Z" fill={DK} /><path d="M15 0V16" stroke="#404040" strokeWidth="2" /></I></Transport>
        <Track>
          <TrackIcons>{TimelineIcons.map((ic, i) => <TrackItem key={i}>{ic}</TrackItem>)}</TrackIcons>
          <I w={480} h={10}>
            <path d="M15 1V9H465V1M45 2V9M75 2V9M105 2V9M135 2V9M165 2V9M195 2V9M225 2V9M255 2V9M285 2V9M315 2V9M345 2V9M375 2V9M405 2V9M435 2V9" fill="none" stroke="#cfcfcf" strokeWidth="2" />
          </I>
        </Track>
        <Marker>
          <I w={16} h={41}><path d="M0 0H15V4L9 11V41H6V11L0 4Z" fill="#5a5a5a" /></I>
        </Marker>
        <Cog>
          <I w={20} h={20}>
            <circle cx="10" cy="10" r="6" fill="none" stroke="#8a8a8a" strokeWidth="4" />
            <path d="M10 0V20M0 10H20M3 3L17 17M17 3L3 17" stroke="#8a8a8a" strokeWidth="3" strokeDasharray="3.500 13 3.500 0" />
          </I>
        </Cog>
      </Timeline>
    </Page>
  );
}
